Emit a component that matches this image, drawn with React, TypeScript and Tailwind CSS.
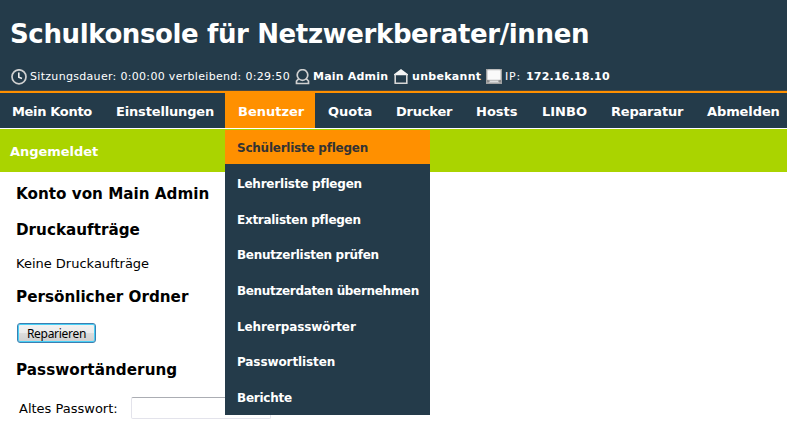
const navItems = [
  { label: 'Mein Konto', size: 'w-[104px] pl-3 tracking-[-0.33px]' },
  { label: 'Einstellungen', size: 'w-[121px] pl-3 tracking-[-0.16px]' },
  { label: 'Benutzer', size: 'w-[90px] pl-[13px] bg-[#ff9000]' },
  { label: 'Quota', size: 'w-[69px] pl-[13px]' },
  { label: 'Drucker', size: 'w-[80px] pl-3 tracking-[-0.2px]' },
  { label: 'Hosts', size: 'w-[66px] pl-3' },
  { label: 'LINBO', size: 'w-[69px] pl-3' },
  { label: 'Reparatur', size: 'w-[96px] pl-3 tracking-[-0.2px]' },
  { label: 'Abmelden', size: 'w-[92px] pl-3 tracking-[-0.1px]' },
];

const menuItems = [
  { label: 'Schülerliste pflegen', style: 'h-[34px] pt-0.5 bg-[#ff9000] text-[#333333] tracking-[-0.24px]' },
  { label: 'Lehrerliste pflegen', style: 'h-[37px] pt-0.5 tracking-[-0.22px]' },
  { label: 'Extralisten pflegen', style: 'h-[35px] pt-0.5 tracking-[-0.28px]' },
  { label: 'Benutzerlisten prüfen', style: 'h-[36px] pt-0.5 tracking-[-0.3px]' },
  { label: 'Benutzerdaten übernehmen', style: 'h-[36px] pt-0.5 tracking-[-0.34px]' },
  { label: 'Lehrerpasswörter', style: 'h-[36px] pt-0.5 tracking-[-0.1px]' },
  { label: 'Passwortlisten', style: 'h-[35px] tracking-[-0.1px]' },
  { label: 'Berichte', style: 'h-[36px] pt-0.5 tracking-[-0.25px]' },
];

function ClockIcon() {
  return (
    <svg className="h-4 w-4 shrink-0" viewBox="0 0 16 16" fill="none">
      <circle cx="8" cy="7.8" r="7" stroke="#d0d0d0" strokeWidth="1.7" />
      <path d="M7.8 3.5v4.7l3.2 1.3" stroke="#ededed" strokeWidth="1.6" />
    </svg>
  );
}

function UserIcon() {
  return (
    <svg className="h-4 w-[15px] shrink-0" viewBox="0 0 15 16" fill="none" stroke="#d0d0d0" strokeWidth="1.7">
      <circle cx="7.5" cy="6" r="5.3" />
      <path d="M3.7 9.8 1.5 12v2.5h12V12l-2.2-2.2" />
    </svg>
  );
}

function HouseIcon() {
  return (
    <svg className="h-4 w-[14px] shrink-0" viewBox="0 0 14 16" fill="none">
      <path d="M0 6.3V5.3L7 0l7 5.3v1z" fill="#f4f4f4" />
      <path d="M1.2 5.5v8.7h11.6V5.5" stroke="#d6d6d6" strokeWidth="1.6" />
    </svg>
  );
}

function MonitorIcon() {
  return (
    <svg className="mb-px h-[15px] w-4 shrink-0" viewBox="0 0 16 15">
      <path d="M0 0h16v15H0z" fill="#a2a2a2" />
      <rect x="1.5" y="1" width="13" height="10" rx="1" fill="#fafafa" stroke="#d8d8d8" />
      <path d="M4 12h8l1.5 1.5h-11z" fill="#dedede" />
      <path d="M1 12h2.5M12.5 12H15" stroke="#707070" />
    </svg>
  );
}

export default function App() {
  return (
    <div className="relative h-[421px] w-[787px] overflow-hidden bg-white font-['DejaVu_Sans',sans-serif] text-[13px] whitespace-nowrap text-black">
      <header className="h-[93px] border-b-2 border-[#ff9000] bg-[#243b4a] text-white shadow-[inset_0_-1px_0_#4a4840]">
        <h1 className="h-[69px] pt-[14px] pl-[10px] text-[26px] leading-[40px] font-bold tracking-[-0.38px]">
          Schulkonsole für Netzwerkberater/innen
        </h1>
        <div className="flex h-4 items-center pl-[11px] text-[11px]">
          <ClockIcon />
          <span className="ml-[3px] w-[265px] pt-px tracking-[0.31px]">Sitzungsdauer: 0:00:00 verbleibend: 0:29:50</span>
          <UserIcon />
          <b className="ml-[3px] w-[81px] pt-px tracking-[0.2px]">Main Admin</b>
          <HouseIcon />
          <b className="ml-1 w-[74px] pt-px tracking-[0.3px]">unbekannt</b>
          <MonitorIcon />
          <span className="ml-[3px] w-[21px] pt-px tracking-[0.8px]">IP:</span>
          <b className="pt-px tracking-[0.2px]">172.16.18.10</b>
        </div>
      </header>
      <nav className="flex h-[35px] bg-[#243b4a] font-bold text-white">
        {navItems.map((item) => (
          <div key={item.label} className={`flex shrink-0 items-center pt-0.5 ${item.size}`}>
            {item.label}
          </div>
        ))}
      </nav>
      <div className="mt-px flex h-[43px] items-center bg-[#aad400] pt-0.5 pl-[10px] font-bold tracking-[-0.05px] text-white">
        Angemeldet
      </div>
      <main className="pl-4">
        <h2 className="h-[36px] pt-3 text-[15.2px] leading-5 font-bold">Konto von Main Admin</h2>
        <h2 className="h-[36px] pt-3 text-[15.2px] leading-5 font-bold">Druckaufträge</h2>
        <p className="h-[32px] pt-[10px] leading-5">Keine Druckaufträge</p>
        <h2 className="h-[47px] pt-[11px] text-[15.2px] leading-5 font-bold">Persönlicher Ordner</h2>
        <button className="ml-px flex h-[20px] w-[79px] items-center justify-center rounded-[3px] border border-[#3c7fb1] bg-[linear-gradient(#f2f2f2,#ebebeb_50%,#dddddd_50%,#cfcfcf)] pt-px font-['Noto_Sans',sans-serif] text-[12px] tracking-[-0.3px] shadow-[inset_0_0_0_1px_#48d0f6]">
          Reparieren
        </button>
        <h2 className="h-[54px] pt-[17px] text-[15.2px] leading-5 font-bold tracking-[0.05px]">Passwortänderung</h2>
        <div className="flex h-[22px] items-center pl-[3px]">
          <label className="w-[112px] pt-0.5" htmlFor="old-password">Altes Passwort:</label>
          <input id="old-password" type="password" className="h-[22px] w-[140px] rounded-[2px] border border-[#e3e3eb] border-t-[#abadb3] bg-white" />
        </div>
      </main>
      <div className="absolute top-[130px] left-[225px] h-[285px] w-[205px] bg-[#243b4a] text-[12px] font-bold text-white">
        {menuItems.map((item) => (
          <div key={item.label} className={`flex items-center pl-3 ${item.style}`}>
            {item.label}
          </div>
        ))}
      </div>
    </div>
  );
}
